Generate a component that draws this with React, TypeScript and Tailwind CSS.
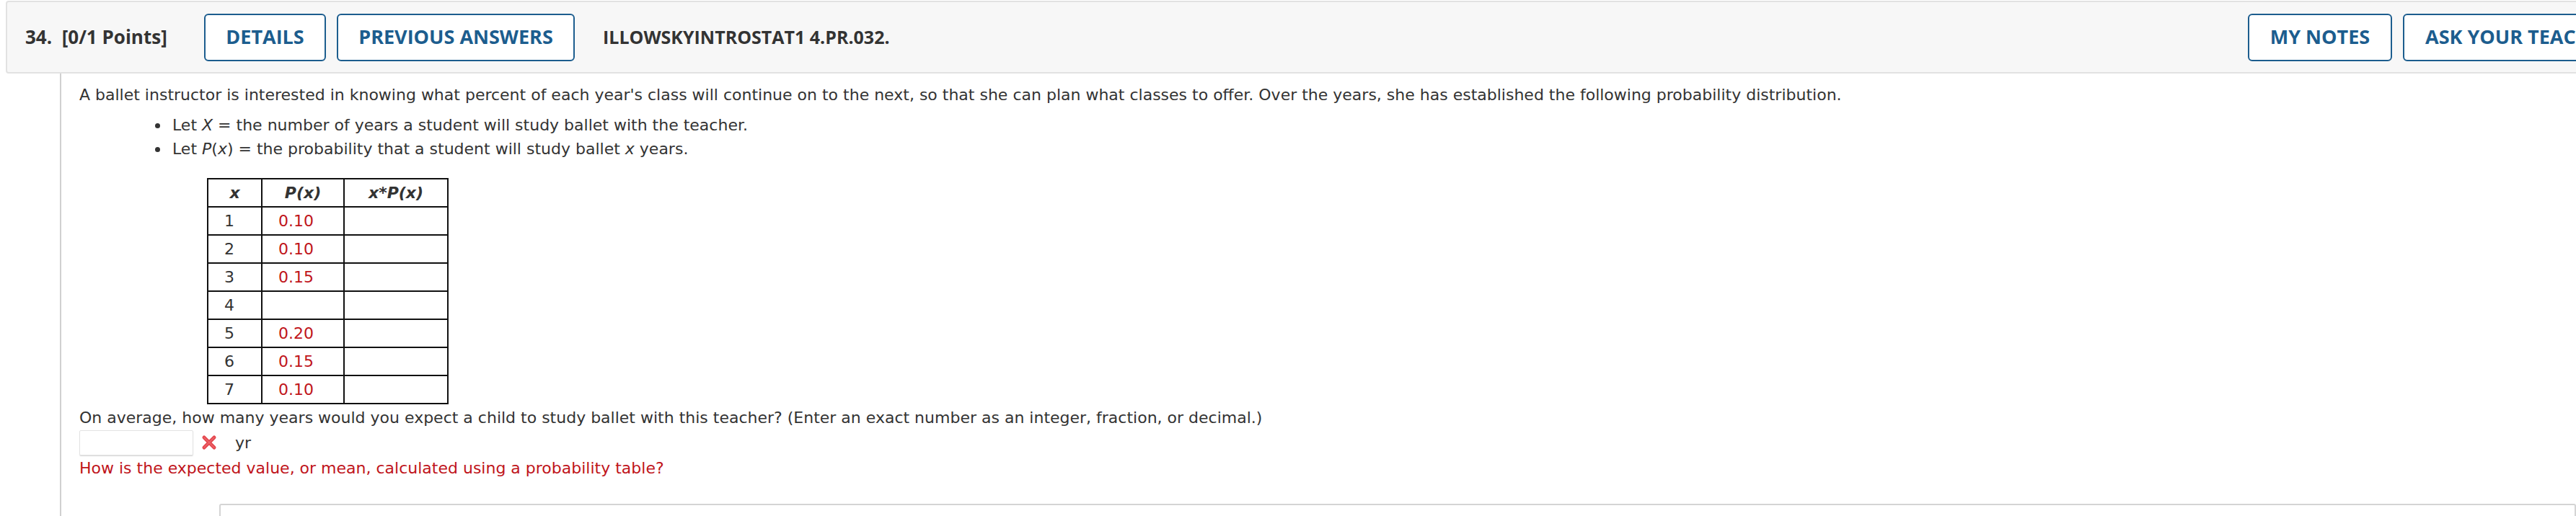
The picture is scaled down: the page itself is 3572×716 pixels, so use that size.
import React from "react";

const rows: { x: number; p: string }[] = [
  { x: 1, p: "0.10" },
  { x: 2, p: "0.10" },
  { x: 3, p: "0.15" },
  { x: 4, p: "" },
  { x: 5, p: "0.20" },
  { x: 6, p: "0.15" },
  { x: 7, p: "0.10" },
];

function HeadButton({ label, className }: { label: string; className: string }) {
  return (
    <button
      className={
        "h-[66px] shrink-0 rounded-[6px] border-2 border-[#1c5d8e] bg-white text-center text-[27px] font-bold whitespace-nowrap text-[#1c5d8e] [font-family:'Open_Sans',sans-serif] " +
        className
      }
    >
      {label}
    </button>
  );
}

function WrongMark() {
  return (
    <svg width="22" height="22" viewBox="0 0 22 22" className="shrink-0">
      <path d="M4 4 L18 18 M18 4 L4 18" stroke="#e5464d" strokeWidth="5" strokeLinecap="round" />
      <path d="M4 4 L18 18 M18 4 L4 18" stroke="#f07a7f" strokeWidth="1.5" strokeLinecap="round" opacity="0.6" />
    </svg>
  );
}

export default function App() {
  return (
    <div className="h-[716px] w-[3572px] overflow-hidden bg-white pt-[1px] pl-[8px]">
      {/* question header */}
      <div className="flex h-[101px] w-[3711px] items-center rounded-[4px] border-2 border-[#e2e2e2] bg-[#f7f7f7] pl-[25px] text-[#333] [font-family:'Open_Sans',sans-serif]">
        <span className="w-[248px] shrink-0 text-[26px] font-bold whitespace-pre">34.  [0/1 Points]</span>
        <div className="flex gap-[15px]">
          <HeadButton label="DETAILS" className="w-[169px]" />
          <HeadButton label="PREVIOUS ANSWERS" className="w-[330px]" />
        </div>
        <span className="ml-[39px] text-[25px] font-bold">ILLOWSKYINTROSTAT1 4.PR.032.</span>
        <div className="ml-auto flex w-[600px] shrink-0 gap-[15px]">
          <HeadButton label="MY NOTES" className="w-[200px]" />
          <HeadButton label="ASK YOUR TEACHER" className="px-[29px]" />
        </div>
      </div>

      {/* question body */}
      <div className="ml-[75px] h-[620px] border-l-2 border-[#d0d0d0] pt-[13px] pl-[25px] text-[22px] leading-[33px] text-[#333] [font-family:'DejaVu_Sans',Verdana,sans-serif]">
        <p>
          A ballet instructor is interested in knowing what percent of each year's class will continue on to the next, so
          that she can plan what classes to offer. Over the years, she has established the following probability
          distribution.
        </p>
        <ul className="mt-[9px] list-disc pl-[125px]">
          <li className="pl-[4px]">
            Let <i>X</i> = the number of years a student will study ballet with the teacher.
          </li>
          <li className="pl-[4px]">
            Let <i>P</i>(<i>x</i>) = the probability that a student will study ballet <i>x</i> years.
          </li>
        </ul>

        <table className="mt-[24px] ml-[177px] border-collapse border-2 border-[#111]">
          <thead>
            <tr className="h-[39px]">
              <th className="w-[75px] border-2 border-[#111] font-bold italic">x</th>
              <th className="w-[114px] border-2 border-[#111] font-bold italic">P(x)</th>
              <th className="w-[144px] border-2 border-[#111] font-bold italic">x*P(x)</th>
            </tr>
          </thead>
          <tbody>
            {rows.map((r) => (
              <tr key={r.x} className="h-[39px]">
                <td className="border-2 border-[#111] pl-[22px]">{r.x}</td>
                <td className="border-2 border-[#111] pl-[22px] text-[#c0141b]">{r.p}</td>
                <td className="border-2 border-[#111]"></td>
              </tr>
            ))}
          </tbody>
        </table>

        <p className="mt-[2px]">
          On average, how many years would you expect a child to study ballet with this teacher? (Enter an exact number as an
          integer, fraction, or decimal.)
        </p>
        <div className="flex h-[36px] items-center">
          <div className="h-[35px] w-[158px] rounded-[2px] border border-[#e3e3e3] shadow-[0_1px_1px_#d8d8d8]" />
          <span className="ml-[11px]">
            <WrongMark />
          </span>
          <span className="ml-[25px]">yr</span>
        </div>
        <p className="mt-[1px] text-[#c0141b]">How is the expected value, or mean, calculated using a probability table?</p>

        <div className="mt-[33px] ml-[194px] h-[40px] rounded-[3px] border-2 border-[#d4d4d4]" />
      </div>
    </div>
  );
}
